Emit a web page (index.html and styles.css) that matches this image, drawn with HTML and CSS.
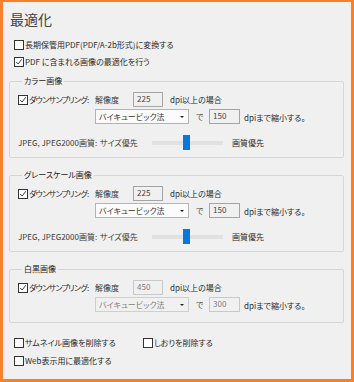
FILE: index.html
```html
<!DOCTYPE html>
<html>
<head>
    <meta charset="utf-8">
    <title>最適化</title>
    <link rel="stylesheet" href="styles.css">
</head>
<body>
    <div class="window">
        <h1 class="title">最適化</h1>

        <div class="check-row first">
            <span class="cb"></span>長期保管用PDF(PDF/A-2b形式)に変換する
        </div>
        <div class="check-row">
            <span class="cb checked"><svg viewBox="0 0 10 10"><polyline points="1.5,5 4,7.5 8.5,1.5"/></svg></span>PDF に含まれる画像の最適化を行う
        </div>

        <fieldset class="group">
            <legend>カラー画像</legend>
            <div class="row first">
                <span class="cb-label"><span class="cb checked"><svg viewBox="0 0 10 10"><polyline points="1.5,5 4,7.5 8.5,1.5"/></svg></span><span class="tight">ダウンサンプリング:</span></span>
                <span class="res-label">解像度</span>
                <span class="field">225</span>
                <span class="unit">dpi以上の場合</span>
            </div>
            <div class="row indent">
                <div class="combo">バイキュービック法<span class="arrow"></span></div>
                <span class="de">で</span>
                <span class="field wide">150</span>
                <span class="unit-to">dpiまで縮小する。</span>
            </div>
            <div class="row quality">
                <span class="q-label">JPEG, JPEG2000画質:</span>
                <span class="q-min">サイズ優先</span>
                <div class="slider"><div class="track"></div><div class="thumb"></div></div>
                <span class="q-max">画質優先</span>
            </div>
        </fieldset>

        <fieldset class="group">
            <legend>グレースケール画像</legend>
            <div class="row first">
                <span class="cb-label"><span class="cb checked"><svg viewBox="0 0 10 10"><polyline points="1.5,5 4,7.5 8.5,1.5"/></svg></span><span class="tight">ダウンサンプリング:</span></span>
                <span class="res-label">解像度</span>
                <span class="field">225</span>
                <span class="unit">dpi以上の場合</span>
            </div>
            <div class="row indent">
                <div class="combo">バイキュービック法<span class="arrow"></span></div>
                <span class="de">で</span>
                <span class="field wide">150</span>
                <span class="unit-to">dpiまで縮小する。</span>
            </div>
            <div class="row quality">
                <span class="q-label">JPEG, JPEG2000画質:</span>
                <span class="q-min">サイズ優先</span>
                <div class="slider"><div class="track"></div><div class="thumb"></div></div>
                <span class="q-max">画質優先</span>
            </div>
        </fieldset>

        <fieldset class="group mono">
            <legend>白黒画像</legend>
            <div class="row first">
                <span class="cb-label"><span class="cb checked"><svg viewBox="0 0 10 10"><polyline points="1.5,5 4,7.5 8.5,1.5"/></svg></span><span class="tight">ダウンサンプリング:</span></span>
                <span class="res-label">解像度</span>
                <span class="field off">450</span>
                <span class="unit">dpi以上の場合</span>
            </div>
            <div class="row indent">
                <div class="combo off">バイキュービック法<span class="arrow"></span></div>
                <span class="de">で</span>
                <span class="field wide off">300</span>
                <span class="unit-to">dpiまで縮小する。</span>
            </div>
        </fieldset>

        <div class="bottom-row">
            <div class="check-row thumb-opt"><span class="cb"></span>サムネイル画像を削除する</div>
            <div class="check-row"><span class="cb"></span>しおりを削除する</div>
        </div>
        <div class="check-row last">
            <span class="cb"></span>Web表示用に最適化する
        </div>
    </div>
</body>
</html>
```

FILE: styles.css
```css
body {
    margin: 0;
    font-family: "Liberation Sans Narrow", "Noto Sans CJK JP", sans-serif;
    font-size: 8px;
    font-feature-settings: "palt";
    color: #2a2a2a;
}
.window {
    width: 354px;
    height: 382px;
    box-sizing: border-box;
    border: 3px solid #f7812a;
    border-top-width: 2px;
    background: #f0f0f0;
    padding: 0 7px 0 6px;
}
.title {
    margin: 8px 0 0 1px;
    font-size: 14px;
    line-height: 18px;
    font-weight: normal;
    color: #444;
}
.check-row {
    display: flex;
    align-items: center;
    height: 14px;
    line-height: 12px;
    margin: 3px 0 0 5px;
    white-space: nowrap;
}
.check-row.first {
    margin-top: 10px;
}
.cb {
    width: 10px;
    height: 10px;
    box-sizing: border-box;
    border: 1px solid #333;
    background: #fff;
    margin-right: 1px;
    flex-shrink: 0;
}
.cb svg {
    display: block;
    width: 8px;
    height: 8px;
}
.cb svg polyline {
    fill: none;
    stroke: #222;
    stroke-width: 1.1;
}
.group {
    margin: 11px 0 0;
    padding: 0 8px 7px;
    border: 1px solid #d6d6d6;
    border-radius: 2px;
    min-width: 0;
}
.check-row + .group {
    margin-top: 6px;
}
.group legend {
    margin-left: 4px;
    padding: 0 2px;
    line-height: 12px;
    color: #222;
}
.group.mono {
    padding-bottom: 10px;
}
.row {
    display: flex;
    align-items: center;
    height: 15px;
    margin-top: 2px;
    line-height: 12px;
    white-space: nowrap;
}
.row.first {
    margin-top: 5px;
}
.row.quality {
    margin-top: 11px;
}
.row.indent {
    padding-left: 77px;
}
.cb-label {
    display: flex;
    align-items: center;
    width: 77px;
}
.tight {
    letter-spacing: -0.7px;
}
.res-label {
    width: 38px;
    color: #3a3a3a;
}
.field {
    box-sizing: border-box;
    width: 30px;
    height: 15px;
    border: 1px solid #a5a5a5;
    background: #f0f0f0;
    padding: 0 3px;
    line-height: 11px;
    color: #444;
    margin-right: 7px;
}
.field.wide {
    width: 31px;
    margin-right: 4px;
}
.field.off {
    border-color: #c9c9c9;
    color: #7d7d7d;
}
.combo {
    position: relative;
    box-sizing: border-box;
    width: 94px;
    height: 15px;
    border: 1px solid #b3b3b3;
    background: #fbfbfb;
    padding: 0 3px;
    line-height: 13px;
    color: #333;
}
.combo.off {
    background: #f0f0f0;
    border-color: #cfcfcf;
    color: #808080;
}
.combo .arrow {
    position: absolute;
    right: 4px;
    top: 6px;
    border-left: 2px solid transparent;
    border-right: 2px solid transparent;
    border-top: 2px solid #222;
}
.de {
    width: 13px;
    margin-left: 7px;
    color: #444;
}
.unit-to {
    align-self: flex-end;
}
.q-label {
    width: 82px;
    color: #3a3a3a;
}
.q-min {
    width: 52px;
    color: #3a3a3a;
}
.slider {
    position: relative;
    width: 71px;
    height: 15px;
}
.track {
    margin-top: 6px;
    height: 4px;
    background: #e1e1e1;
}
.thumb {
    position: absolute;
    left: 31px;
    top: 0;
    width: 7px;
    height: 15px;
    background: #0a78d7;
}
.q-max {
    margin-left: 9px;
}
.bottom-row {
    display: flex;
    margin-top: 13px;
}
.bottom-row .check-row {
    margin-top: 0;
}
.bottom-row .thumb-opt {
    width: 124px;
}
.check-row.last {
    margin-top: 4px;
}
```
